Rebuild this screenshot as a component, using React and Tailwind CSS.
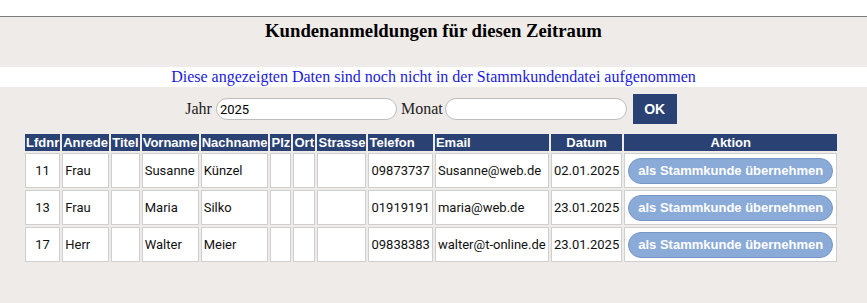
import React from 'react';

const columns = [
  { label: 'Lfdnr', w: 'w-[35px]', align: 'text-left' },
  { label: 'Anrede', w: 'w-[47px]', align: 'text-left' },
  { label: 'Titel', w: 'w-[28px]', align: 'text-left' },
  { label: 'Vorname', w: 'w-[57px]', align: 'text-left' },
  { label: 'Nachname', w: 'w-[67px]', align: 'text-left' },
  { label: 'Plz', w: 'w-[21px]', align: 'text-left' },
  { label: 'Ort', w: 'w-[22px]', align: 'text-left' },
  { label: 'Strasse', w: 'w-[49px]', align: 'text-left' },
  { label: 'Telefon', w: 'w-[64px]', align: 'text-left' },
  { label: 'Email', w: 'w-[114px]', align: 'text-left' },
  { label: 'Datum', w: 'w-[71px]', align: 'text-center' },
  { label: 'Aktion', w: 'w-[213px]', align: 'text-center' },
];

const rows = [
  { nr: 11, anrede: 'Frau', vorname: 'Susanne', nachname: 'Künzel', telefon: '09873737', email: 'Susanne@web.de', datum: '02.01.2025' },
  { nr: 13, anrede: 'Frau', vorname: 'Maria', nachname: 'Silko', telefon: '01919191', email: 'maria@web.de', datum: '23.01.2025' },
  { nr: 17, anrede: 'Herr', vorname: 'Walter', nachname: 'Meier', telefon: '09838383', email: 'walter@t-online.de', datum: '23.01.2025' },
];

const td = 'h-[35px] whitespace-nowrap border border-[#cfcfcf] bg-white px-[2px] align-middle';

export default function App() {
  return (
    <div className="min-h-[303px] bg-[#efebe9] font-['Roboto',sans-serif] text-[13px] text-[#111]">
      <div className="h-[16px] bg-white" />
      <div className="border-t border-[#7c7c7c]">
        <div className="h-[50px] pt-[3px] text-center">
          <h3 className="font-['Liberation_Serif',serif] text-[18.72px] font-bold leading-[22px] text-black">
            Kundenanmeldungen für diesen Zeitraum
          </h3>
        </div>
        <div className="h-[20px] bg-white text-center font-['Liberation_Serif',serif] text-[16px] leading-[20px] text-[#1a1ae0]">
          Diese angezeigten Daten sind noch nicht in der Stammkundendatei aufgenommen
        </div>

        <div className="flex h-[30px] items-center justify-center mt-[7px] pr-[5px] font-['Liberation_Serif',serif] text-[16px] text-[#222]">
          <span className="mr-[4px]">Jahr</span>
          <input
            defaultValue="2025"
            className="h-[22px] w-[181px] rounded-full border border-[#bdbdbd] bg-white px-[3px] font-['Roboto',sans-serif] text-[13px] text-black outline-none"
          />
          <span className="ml-[4px] mr-[2px]">Monat</span>
          <input className="h-[22px] w-[182px] rounded-full border border-[#bdbdbd] bg-white px-[3px] font-['Roboto',sans-serif] text-[13px] outline-none" />
          <button className="ml-[6px] h-[30px] w-[44px] bg-[#2a4173] font-['Liberation_Sans',sans-serif] text-[14px] font-bold text-white">
            OK
          </button>
        </div>

        <table className="mt-[8px] ml-[23px] table-fixed border-separate border-spacing-[2px]">
          <thead>
            <tr>
              {columns.map((c) => (
                <th
                  key={c.label}
                  className={`${c.w} ${c.align} h-[17px] whitespace-nowrap bg-[#2a4173] px-[1px] font-['Liberation_Sans',sans-serif] text-[13px] font-bold leading-[17px] text-white`}
                >
                  {c.label}
                </th>
              ))}
            </tr>
          </thead>
          <tbody>
            {rows.map((r) => (
              <tr key={r.nr}>
                <td className={`${td} text-center`}>{r.nr}</td>
                <td className={td}>{r.anrede}</td>
                <td className={td}></td>
                <td className={td}>{r.vorname}</td>
                <td className={td}>{r.nachname}</td>
                <td className={td}></td>
                <td className={td}></td>
                <td className={td}></td>
                <td className={td}>{r.telefon}</td>
                <td className={td}>{r.email}</td>
                <td className={td}>{r.datum}</td>
                <td className={`${td} text-center`}>
                  <button className="h-[26px] w-[205px] rounded-full border border-[#7696c6] bg-[#8aaad8] font-['Liberation_Sans',sans-serif] text-[13px] font-bold text-white">
                    als Stammkunde übernehmen
                  </button>
                </td>
              </tr>
            ))}
          </tbody>
        </table>
      </div>
    </div>
  );
}
